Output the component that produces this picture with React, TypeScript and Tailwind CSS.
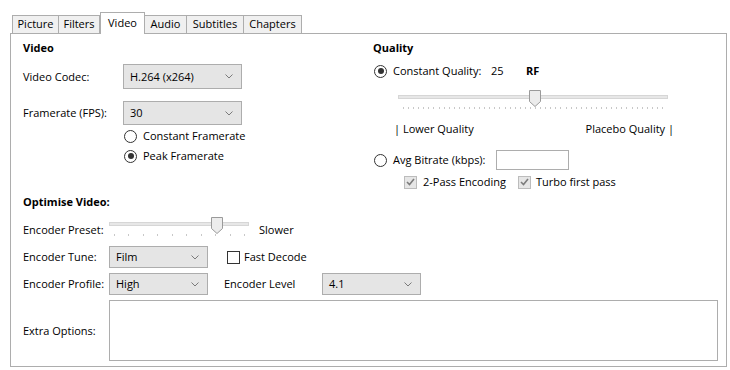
import { ReactNode } from "react";

const tabs: { title: string; w: string; active?: boolean }[] = [
  { title: "Picture", w: "w-[47px]" },
  { title: "Filters", w: "w-[41px]" },
  { title: "Video", w: "w-[45px]", active: true },
  { title: "Audio", w: "w-[42px]" },
  { title: "Subtitles", w: "w-[57px]" },
  { title: "Chapters", w: "w-[58px]" },
];

function Chevron() {
  return (
    <svg width="8" height="5" viewBox="0 0 8 5">
      <path d="M0.5 0.5 L4 4 L7.5 0.5" fill="none" stroke="#7a7a7a" strokeWidth="1" />
    </svg>
  );
}

function Select({ value, w, h }: { value: string; w: string; h: string }) {
  return (
    <div className={`${w} ${h} flex items-center justify-between border border-[#adadad] bg-[#e5e5e5] pl-[6px] pr-[8px]`}>
      <span>{value}</span>
      <Chevron />
    </div>
  );
}

function Radio({ checked, children }: { checked?: boolean; children?: ReactNode }) {
  return (
    <div className="flex items-center gap-[6px]">
      <div className="w-[13px] h-[13px] rounded-full border border-[#333] bg-white flex items-center justify-center shrink-0">
        {checked ? <div className="w-[6px] h-[6px] rounded-full bg-[#333]" /> : null}
      </div>
      <div className="flex items-center">{children}</div>
    </div>
  );
}

function Check({ checked }: { checked?: boolean }) {
  if (!checked) {
    return <div className="w-[13px] h-[13px] border border-[#333] bg-white shrink-0" />;
  }
  return (
    <div className="w-[13px] h-[13px] border border-[#bcbcbc] bg-[#e6e6e6] shrink-0 flex items-center justify-center">
      <svg width="9" height="8" viewBox="0 0 9 8">
        <path d="M1 4 L3.5 6.5 L8 1" fill="none" stroke="#7c7c7c" strokeWidth="1.6" />
      </svg>
    </div>
  );
}

function Slider({ width, trackFrom, trackTo, thumb, ticks, tickFrom, tickTo }: {
  width: number; trackFrom: number; trackTo: number; thumb: number; ticks: number; tickFrom: number; tickTo: number;
}) {
  const marks = Array.from({ length: ticks }, (_, i) => tickFrom + ((tickTo - tickFrom) * i) / (ticks - 1));
  return (
    <svg width={width} height="24" viewBox={`0 0 ${width} 24`}>
      <rect x={trackFrom + 0.5} y="8.5" width={trackTo - trackFrom} height="3" fill="#e7e7e7" stroke="#d6d6d6" />
      {marks.map((m, i) => (
        <rect key={i} x={Math.round(m)} y="20" width="1" height="2" fill="#c8c8c8" />
      ))}
      <path
        d={`M${thumb - 5.5} 3.5 H${thumb + 5.5} V14.5 L${thumb} 19.5 L${thumb - 5.5} 14.5 Z`}
        fill="#ececec"
        stroke="#9a9a9a"
      />
    </svg>
  );
}

export default function App() {
  return (
    <div className="w-[730px] h-[370px] bg-white text-[11px] text-black font-['Open_Sans',sans-serif] pt-[12px] pl-[10px]">
      <div className="flex items-end h-[21px] pl-[2px]">
        {tabs.map((t) => (
          <div
            key={t.title}
            className={`${t.w} flex items-center justify-center border-t border-r border-[#adadad] ${
              t.active ? "h-[22px] bg-white border-l relative z-10 -mb-px" : "h-[18px] bg-[#f0f0f0]"
            } ${t.title === "Picture" ? "border-l" : ""}`}
          >
            {t.title}
          </div>
        ))}
      </div>

      <div className="w-[717px] h-[334px] border border-[#adadad] pl-[12px] leading-[16px]">
        <div className="flex">
          {/* left column */}
          <div className="w-[350px]">
            <div className="mt-[6px] h-[16px] font-bold">Video</div>
            <div className="mt-[8px] flex items-center h-[25px]">
              <div className="w-[100px]">Video Codec:</div>
              <Select value="H.264 (x264)" w="w-[119px]" h="h-[25px]" />
            </div>
            <div className="mt-[12px] flex items-center h-[24px]">
              <div className="w-[100px]">Framerate (FPS):</div>
              <Select value="30" w="w-[119px]" h="h-[24px]" />
            </div>
            <div className="mt-[2px] h-[18px] pl-[101px] flex items-center">
              <Radio>Constant Framerate</Radio>
            </div>
            <div className="mt-[2px] h-[18px] pl-[101px] flex items-center">
              <Radio checked>Peak Framerate</Radio>
            </div>
          </div>

          {/* right column */}
          <div className="flex-1">
            <div className="mt-[6px] h-[16px] font-bold">Quality</div>
            <div className="mt-[7px] h-[16px] pl-[1px] flex items-center">
              <Radio checked>
                <span className="w-[98px]">Constant Quality:</span>
                <span className="w-[35px]">25</span>
                <span className="font-bold">RF</span>
              </Radio>
            </div>
            <div className="mt-[6px] ml-[21px] h-[28px] pt-[2px]">
              <Slider width={280} trackFrom={4} trackTo={273} thumb={141} ticks={52} tickFrom={9} tickTo={268} />
            </div>
            <div className="mt-[8px] ml-[21px] w-[280px] h-[16px] flex justify-between">
              <span>| Lower Quality</span>
              <span>Placebo Quality |</span>
            </div>
            <div className="mt-[13px] h-[20px] pl-[1px] flex items-center">
              <Radio>
                <span className="w-[103px]">Avg Bitrate (kbps):</span>
                <div className="w-[73px] h-[20px] border border-[#adadad] bg-white" />
              </Radio>
            </div>
            <div className="mt-[4px] h-[16px] pl-[31px] flex items-center">
              <Check checked />
              <span className="ml-[6px] w-[95px]">2-Pass Encoding</span>
              <Check checked />
              <span className="ml-[5px]">Turbo first pass</span>
            </div>
          </div>
        </div>

        {/* optimise video */}
        <div className="mt-[4px] h-[16px] font-bold">Optimise Video:</div>
        <div className="mt-[4px] h-[24px] flex">
          <div className="w-[86px] pt-[8px]">Encoder Preset:</div>
          <Slider width={140} trackFrom={0} trackTo={139} thumb={108} ticks={10} tickFrom={5} tickTo={135} />
          <div className="ml-[10px] pt-[8px]">Slower</div>
        </div>
        <div className="mt-[8px] h-[22px] flex items-center">
          <div className="w-[86px]">Encoder Tune:</div>
          <Select value="Film" w="w-[99px]" h="h-[22px]" />
          <div className="ml-[19px]">
            <Check />
          </div>
          <span className="ml-[4px]">Fast Decode</span>
        </div>
        <div className="mt-[5px] h-[22px] flex items-center">
          <div className="w-[86px]">Encoder Profile:</div>
          <Select value="High" w="w-[99px]" h="h-[22px]" />
          <div className="ml-[16px] w-[98px]">Encoder Level</div>
          <Select value="4.1" w="w-[99px]" h="h-[22px]" />
        </div>
        <div className="mt-[5px] h-[61px] flex items-center">
          <div className="w-[86px]">Extra Options:</div>
          <div className="w-[609px] h-[61px] border border-[#adadad] bg-white" />
        </div>
      </div>
    </div>
  );
}
